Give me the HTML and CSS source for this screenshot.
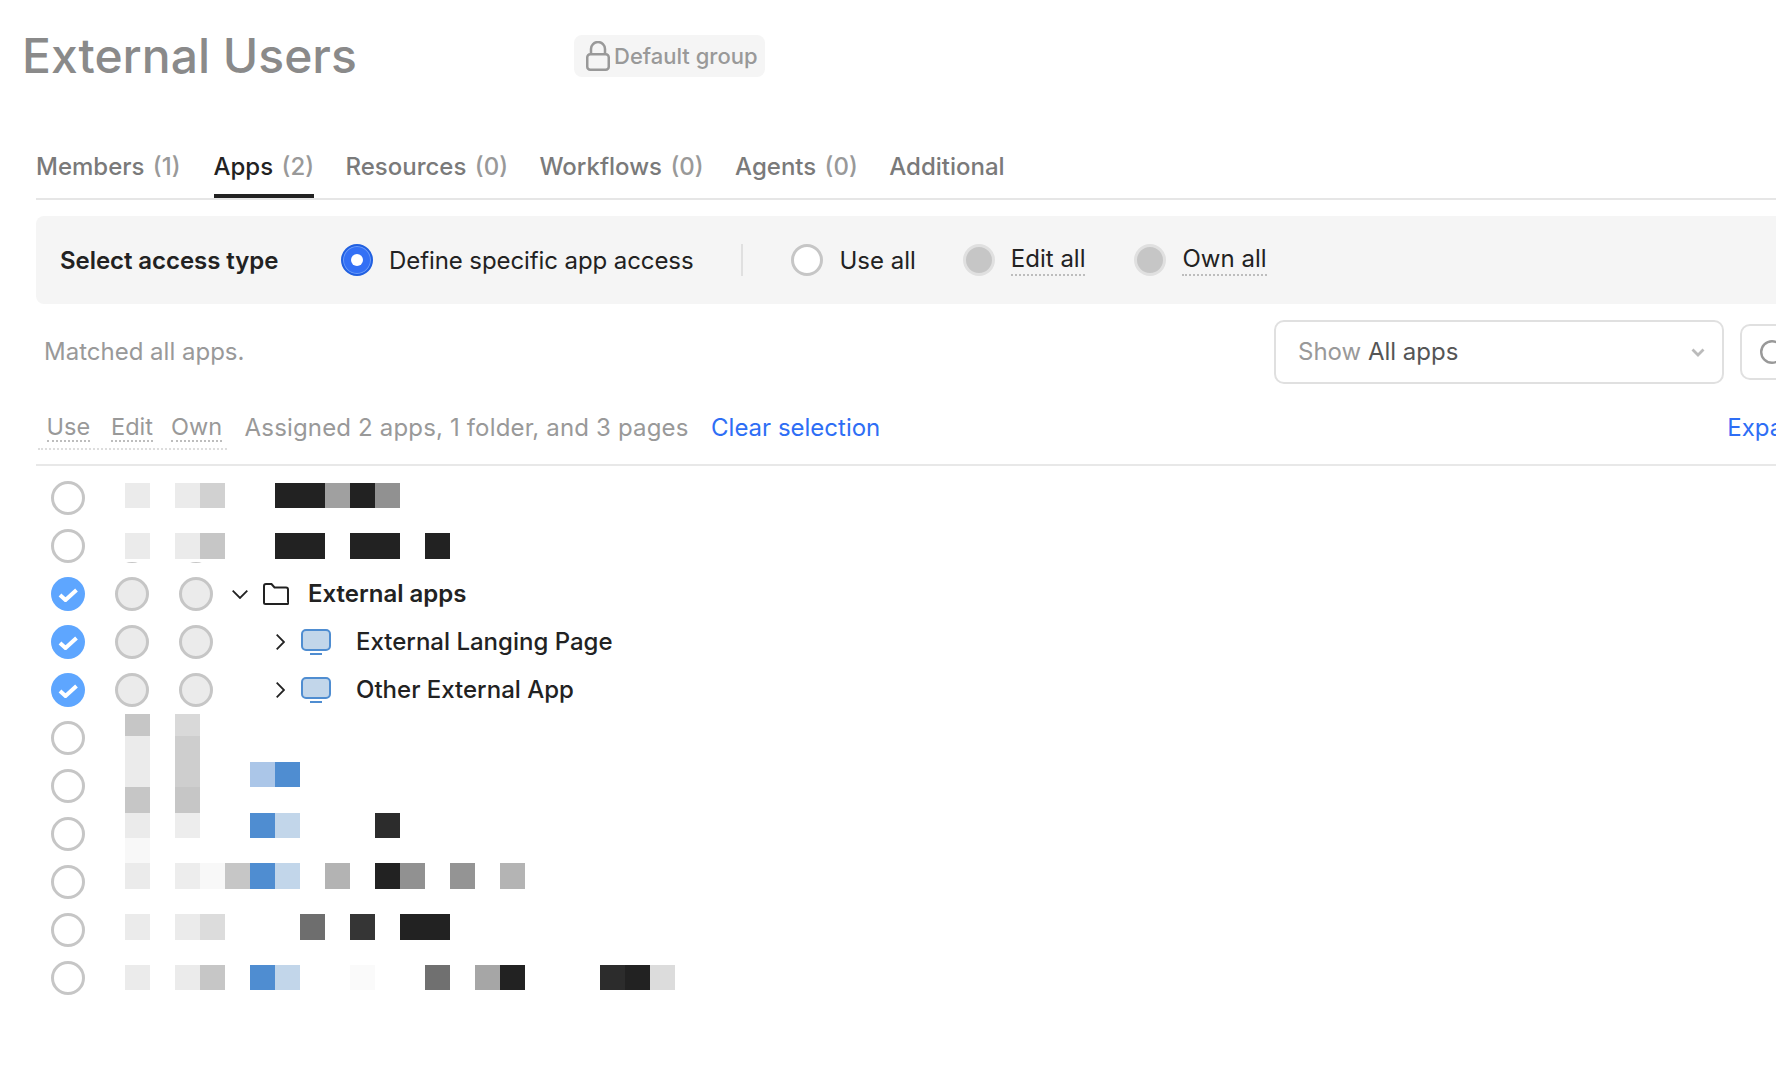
FILE: index.html
```html
<!DOCTYPE html>
<html lang="en">
<head>
<meta charset="utf-8">
<title>External Users</title>
<link rel="stylesheet" href="styles.css">
</head>
<body>
<div class="page">
  <header class="head">
    <h1 class="title">External Users</h1>
    <span class="badge">
      <svg class="lock" width="24" height="30" viewBox="0 0 24 30" fill="none" stroke="#999" stroke-width="2.5"><rect x="1.25" y="13.25" width="21.5" height="15.5" rx="3"/><path d="M5 13V8a7 7 0 0 1 14 0v5"/></svg>
      Default group
    </span>
  </header>

  <nav class="tabs">
    <a class="tab">Members <span class="count">(1)</span></a>
    <a class="tab active">Apps <span class="count">(2)</span></a>
    <a class="tab">Resources <span class="count">(0)</span></a>
    <a class="tab">Workflows <span class="count">(0)</span></a>
    <a class="tab">Agents <span class="count">(0)</span></a>
    <a class="tab">Additional</a>
  </nav>

  <section class="access">
    <strong class="access-title">Select access type</strong>
    <label class="opt opt-define"><span class="radio on"></span><span class="define-text">Define specific app access</span></label>
    <span class="vr"></span>
    <label class="opt opt-use"><span class="radio"></span>Use all</label>
    <label class="opt opt-edit"><span class="radio off"></span><span class="dot-u">Edit all</span></label>
    <label class="opt opt-own"><span class="radio off"></span><span class="dot-u">Own all</span></label>
  </section>

  <section class="filter">
    <span class="matched">Matched all apps.</span>
    <div class="select">
      <span class="select-text"><span class="muted">Show</span> All apps</span>
      <svg width="14" height="9" viewBox="0 0 14 9" fill="none" stroke="#bbb" stroke-width="2.8"><path d="M1.500 1.500 7 7l5.500-5.500"/></svg>
    </div>
    <div class="search">
      <svg width="30" height="30" viewBox="0 0 30 30" fill="none" stroke="#999" stroke-width="2.4"><circle cx="12" cy="12" r="10.800"/><path d="m20 20 7 7"/></svg>
    </div>
  </section>

  <section class="cols">
    <div class="col-labels">
      <span class="dot-u">Use</span>
      <span class="dot-u">Edit</span>
      <span class="dot-u">Own</span>
    </div>
    <span class="assigned">Assigned 2 apps, 1 folder, and 3 pages</span>
    <a class="link clear">Clear selection</a>
    <a class="link expand">Expand all</a>
  </section>

  <section class="list">
    <div class="row"><span class="rd"></span><span class="rd off"></span><span class="rd off"></span></div>
    <div class="row"><span class="rd"></span><span class="rd off"></span><span class="rd off"></span></div>
    <div class="row">
      <span class="rd checked"><svg width="20" height="16" viewBox="0 0 20 16" fill="none" stroke="#fff" stroke-width="4"><path d="M2 9l5.500 5L18.500 4"/></svg></span><span class="rd off"></span><span class="rd off"></span>
      <div class="tree d0">
        <svg class="chev-d" width="16" height="9" viewBox="0 0 16 9" fill="none" stroke="#222" stroke-width="1.8"><path d="M.7.7 8 8l7.300-7.300"/></svg>
        <svg class="folder" width="26" height="22" viewBox="0 0 26 22" fill="none" stroke="#222" stroke-width="2"><path d="M1 19.500V3a2 2 0 0 1 2-2h5.500l3 3.500H23a2 2 0 0 1 2 2v12A1.500 1.500 0 0 1 23.500 21h-21A1.500 1.500 0 0 1 1 19.500Z"/></svg>
        <span class="name strong">External apps</span>
      </div>
    </div>
    <div class="row">
      <span class="rd checked"><svg width="20" height="16" viewBox="0 0 20 16" fill="none" stroke="#fff" stroke-width="4"><path d="M2 9l5.500 5L18.500 4"/></svg></span><span class="rd off"></span><span class="rd off"></span>
      <div class="tree d1">
        <svg class="chev-r" width="9" height="16" viewBox="0 0 9 16" fill="none" stroke="#222" stroke-width="1.8"><path d="M.7.7 8 8 .7 15.300"/></svg>
        <svg class="screen" width="30" height="26" viewBox="0 0 30 26"><rect x="1" y="1" width="28" height="20" rx="4" fill="#c2d6ea" stroke="#4f8dd1" stroke-width="2"/><path d="M9 25h12" stroke="#4f8dd1" stroke-width="2"/></svg>
        <span class="name">External Langing Page</span>
      </div>
    </div>
    <div class="row">
      <span class="rd checked"><svg width="20" height="16" viewBox="0 0 20 16" fill="none" stroke="#fff" stroke-width="4"><path d="M2 9l5.500 5L18.500 4"/></svg></span><span class="rd off"></span><span class="rd off"></span>
      <div class="tree d1">
        <svg class="chev-r" width="9" height="16" viewBox="0 0 9 16" fill="none" stroke="#222" stroke-width="1.8"><path d="M.7.7 8 8 .7 15.300"/></svg>
        <svg class="screen" width="30" height="26" viewBox="0 0 30 26"><rect x="1" y="1" width="28" height="20" rx="4" fill="#c2d6ea" stroke="#4f8dd1" stroke-width="2"/><path d="M9 25h12" stroke="#4f8dd1" stroke-width="2"/></svg>
        <span class="name">Other External App</span>
      </div>
    </div>
    <div class="row"><span class="rd"></span></div>
    <div class="row"><span class="rd"></span></div>
    <div class="row"><span class="rd"></span></div>
    <div class="row"><span class="rd"></span></div>
    <div class="row"><span class="rd"></span></div>
    <div class="row"><span class="rd"></span></div>

    <div class="mosaic m-top">
      <div class="mrow h25"><i class="t-eb"></i><i></i><i class="t-eb"></i><i class="t-d1"></i><i></i><i></i><i class="t-22"></i><i class="t-22"></i><i class="t-a0"></i><i class="t-22"></i><i class="t-91"></i></div>
      <div class="mrow h25"></div>
      <div class="mrow h26"><i class="t-eb"></i><i></i><i class="t-eb"></i><i class="t-c6"></i><i></i><i></i><i class="t-22"></i><i class="t-22"></i><i></i><i class="t-22"></i><i class="t-22"></i><i></i><i class="t-22"></i></div>
    </div>

    <div class="mosaic m-bottom">
      <div class="mrow h22"><i class="t-c6"></i><i></i><i class="t-d9"></i></div>
      <div class="mrow h26"><i class="t-eb"></i><i></i><i class="t-ce"></i></div>
      <div class="mrow h25"><i class="t-eb"></i><i></i><i class="t-ce"></i><i></i><i></i><i class="t-a"></i><i class="t-b"></i></div>
      <div class="mrow h26"><i class="t-c6"></i><i></i><i class="t-c6"></i></div>
      <div class="mrow h25"><i class="t-eb"></i><i></i><i class="t-ed"></i><i></i><i></i><i class="t-b"></i><i class="t-c"></i><i></i><i></i><i></i><i class="t-2c"></i></div>
      <div class="mrow h25"><i class="t-f8"></i></div>
      <div class="mrow h26"><i class="t-eb"></i><i></i><i class="t-ed"></i><i class="t-f8"></i><i class="t-c6"></i><i class="t-b"></i><i class="t-c"></i><i></i><i class="t-b3"></i><i></i><i class="t-22"></i><i class="t-91"></i><i></i><i class="t-94"></i><i></i><i class="t-b4"></i></div>
      <div class="mrow h25"></div>
      <div class="mrow h26"><i class="t-eb"></i><i></i><i class="t-eb"></i><i class="t-dc"></i><i></i><i></i><i></i><i class="t-6e"></i><i></i><i class="t-35"></i><i></i><i class="t-22"></i><i class="t-22"></i></div>
      <div class="mrow h25"></div>
      <div class="mrow h25"><i class="t-eb"></i><i></i><i class="t-eb"></i><i class="t-c6"></i><i></i><i class="t-b"></i><i class="t-c"></i><i></i><i></i><i class="t-fa"></i><i></i><i></i><i class="t-70"></i><i></i><i class="t-a6"></i><i class="t-22"></i><i></i><i></i><i></i><i class="t-2c"></i><i class="t-22"></i><i class="t-dc"></i></div>
    </div>
  </section>
</div>
</body>
</html>
```
FILE: styles.css
```css
* { box-sizing: border-box; }
html, body { margin: 0; height: 100%; overflow: hidden; background: #fff; }
body { font-family: Inter, "Liberation Sans", sans-serif; font-size: 24px; color: #222; }
.page { width: 2100px; height: 1092px; padding-left: 36px; }

.head { display: flex; align-items: center; height: 112px; margin-left: -14px; }
.title { margin: 0; width: 552px; font-size: 48px; font-weight: 500; line-height: 56px; color: #8a8a8a; }
.badge { display: flex; align-items: center; gap: 4px; height: 42px; padding: 0 7px 0 12px; border-radius: 8px; background: #f5f5f5; color: #999; font-weight: 500; font-size: 22px; }
.lock { flex: none; }

.tabs { display: flex; gap: 31.5px; height: 88px; padding-top: 38px; border-bottom: 2px solid #e6e6e6; }
.tab { height: 48px; line-height: 33px; border-bottom: 4px solid transparent; font-weight: 500; color: #7a7a7a; white-space: nowrap; }
.tab:first-child { margin-right: 1.5px; }
.tab.active { color: #222; border-bottom-color: #222; }
.count { color: #999; margin-left: 2px; }

.access { display: flex; align-items: center; height: 88px; margin-top: 16px; padding-left: 24px; border-radius: 8px; background: #f5f5f5; }
.access-title { width: 281px; font-weight: 600; letter-spacing: -0.06px; }
.opt { display: flex; align-items: center; gap: 16px; }
.define-text { letter-spacing: -0.09px; }
.radio { width: 32px; height: 32px; border-radius: 50%; border: 3px solid #c6c6c6; background: #fff; }
.radio.on { display: flex; align-items: center; justify-content: center; border: 2px solid #2160e0; background: #3370f5; box-shadow: inset 0 0 0 1px #6a9af7; }
.radio.on::after { content: ""; width: 12px; height: 12px; border-radius: 50%; background: #fff; }
.radio.off { border-color: #e0e0e0; background: #c6c6c6; }
.vr { width: 2px; height: 32px; margin: 0 48px; background: #e0e0e0; }
.opt-edit { margin-left: 47px; }
.opt-own { margin-left: 49px; }
.dot-u { border-bottom: 2px dotted #bdbdbd; }
.access .dot-u { line-height: 30px; }

.filter { display: flex; align-items: center; height: 96px; padding-left: 8px; }
.matched { flex: none; width: 1230px; margin-bottom: 2px; color: #999; }
.select { flex: none; display: flex; align-items: center; justify-content: space-between; width: 450px; height: 64px; padding: 0 17px 0 22px; border: 2px solid #e0e0e0; border-radius: 10px; color: #555; }
.select-text { margin-bottom: 2px; }
.muted { color: #999; }
.search { flex: none; display: flex; align-items: center; width: 300px; height: 56px; margin-left: 16px; padding: 6px 0 0 18px; border: 2px solid #e0e0e0; border-radius: 10px; }

.cols { display: flex; align-items: flex-start; height: 66px; padding: 12px 0 0 2px; border-bottom: 2px solid #e8e8e8; color: #999; }
.cols > * { line-height: 32px; white-space: nowrap; }
.col-labels { display: flex; gap: 18px; padding: 0 5px 6px 8.5px; border-bottom: 2px dotted #ddd; font-size: 23.5px; }
.col-labels .dot-u { line-height: 30px; height: 30px; }
.col-labels .dot-u:first-child { margin-right: 3px; }
.assigned { margin-left: 17.5px; letter-spacing: 0.16px; }
.link { color: #2e6ef5; }
.clear { margin-left: 22.5px; }
.expand { margin-left: 847px; }

.list { position: relative; padding-top: 8px; }
.row { display: flex; align-items: center; height: 48px; padding-left: 15px; }
.rd { flex: none; display: flex; align-items: center; justify-content: center; width: 34px; height: 34px; border-radius: 50%; border: 3px solid #c6c6c6; background: #fff; }
.rd + .rd { margin-left: 30px; }
.rd.off { background: #ebebeb; }
.rd.checked { border: 0; background: #5ea6ff; }
.tree { display: flex; align-items: center; }
.d0 { padding-left: 19px; }
.d1 { padding-left: 63px; }
.folder { margin-left: 15px; }
.screen { margin-left: 16px; }
.d0 .name { margin-left: 19px; }
.d1 .name { margin-left: 25px; }
.name { margin-bottom: 2px; font-weight: 500; white-space: nowrap; }
.name.strong { font-weight: 600; }

.mosaic { position: absolute; left: 64px; }
.m-top { top: 9px; width: 450px; padding: 8px 0 3px 25px; background: #fff; }
.m-bottom { top: 248px; padding-left: 25px; }
.mrow { display: flex; }
.mrow i { display: block; flex: none; width: 25px; }
.h22 { height: 22px; }
.h25 { height: 25px; }
.h26 { height: 26px; }
.t-eb { background: #ebebeb; }
.t-ed { background: #ededed; }
.t-d1 { background: #d1d1d1; }
.t-c6 { background: #c6c6c6; }
.t-d9 { background: #d9d9d9; }
.t-dc { background: #dcdcdc; }
.t-ce { background: #cecece; }
.t-f8 { background: #f8f8f8; }
.t-fa { background: #fafafa; }
.t-22 { background: #222; }
.t-2c { background: #2c2c2c; }
.t-35 { background: #353535; }
.t-a0 { background: #a0a0a0; }
.t-a6 { background: #a6a6a6; }
.t-91 { background: #919191; }
.t-94 { background: #949494; }
.t-b3 { background: #b3b3b3; }
.t-b4 { background: #b4b4b4; }
.t-6e { background: #6e6e6e; }
.t-70 { background: #707070; }
.t-a { background: #abc6e8; }
.t-b { background: #4f8dd1; }
.t-c { background: #c2d6ea; }
```
